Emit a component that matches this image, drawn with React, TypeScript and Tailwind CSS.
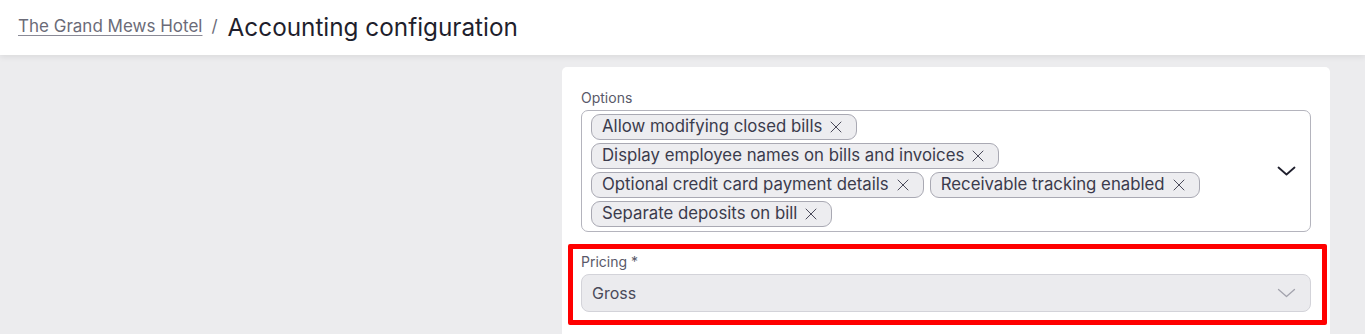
// Accounting configuration — options card with tag multi-select and pricing select.

import { X } from "lucide-react";

const OPTIONS = [
  ["Allow modifying closed bills"],
  ["Display employee names on bills and invoices"],
  ["Optional credit card payment details", "Receivable tracking enabled"],
  ["Separate deposits on bill"],
];

function Chevron({ className, width = 1.8 }: { className?: string; width?: number }) {
  return (
    <svg width="19" height="10" viewBox="0 0 19 10" fill="none" className={className}>
      <path d="M1.5 1.5 L9.5 8.5 L17.5 1.5" stroke="currentColor" strokeWidth={width} strokeLinecap="round" strokeLinejoin="round" />
    </svg>
  );
}

function Chip({ label }: { label: string }) {
  return (
    <span className="flex h-[26px] items-center gap-[4px] rounded-[9px] border border-[#a9a9b3] bg-[#ededf0] pl-[10px] pr-[10px] text-[16.8px] text-[#3b3b4c]">
      {label}
      <X size={20} strokeWidth={1.2} className="text-[#4a4a5a]" />
    </span>
  );
}

export default function App() {
  return (
    <div
      className="h-[334px] overflow-hidden bg-[#ececee]"
      style={{ fontFamily: "Inter, 'Noto Sans', sans-serif" }}
    >
      <header className="flex h-[55px] items-center bg-white px-[18px] pb-[1px] shadow-[0_2px_6px_rgba(0,0,0,0.08)]">
        <a className="text-[17px] text-[#6b6b78] underline underline-offset-[3px] decoration-[#8a8a96]">
          The Grand Mews Hotel
        </a>
        <span className="ml-[9px] mr-[10px] text-[17px] text-[#6b6b78]">/</span>
        <h1 className="text-[24.3px] text-[#1f1f2d]">Accounting configuration</h1>
      </header>

      <div className="flex pl-[562px] pt-[12px]">
        <section className="w-[768px] rounded-[5px] bg-white px-[19px] pt-[22px] pb-[20px]">
          <label className="mb-[4px] block text-[14px] leading-[17px] text-[#595969]">Options</label>
          <div className="flex items-center rounded-[7px] border border-[#b4b4bd] pl-[9px] pr-[14px] pt-[3px] pb-[4px]">
            <div className="flex flex-1 flex-col gap-[3px]">
              {OPTIONS.map((row, i) => (
                <div key={i} className="flex gap-[6px]">
                  {row.map((o) => (
                    <Chip key={o} label={o} />
                  ))}
                </div>
              ))}
            </div>
            <Chevron className="text-[#1f1f2d]" />
          </div>

          <div className="mt-[12px] -ml-[13px] -mr-[16px] rounded-[2px] border-[5px] border-[#ff0000] pl-[8px] pr-[11px] pt-[4px] pb-[8px]">
            <label className="mb-[4px] block text-[14px] leading-[17px] text-[#595969]">Pricing *</label>
            <div className="flex h-[38px] items-center justify-between rounded-[8px] border border-[#d3d3d9] bg-[#ebebee] pl-[10px] pr-[14px]">
              <span className="text-[16px] text-[#4a4a5a]">Gross</span>
              <Chevron className="text-[#a3a3ad]" width={1.3} />
            </div>
          </div>
        </section>
      </div>
    </div>
  );
}
